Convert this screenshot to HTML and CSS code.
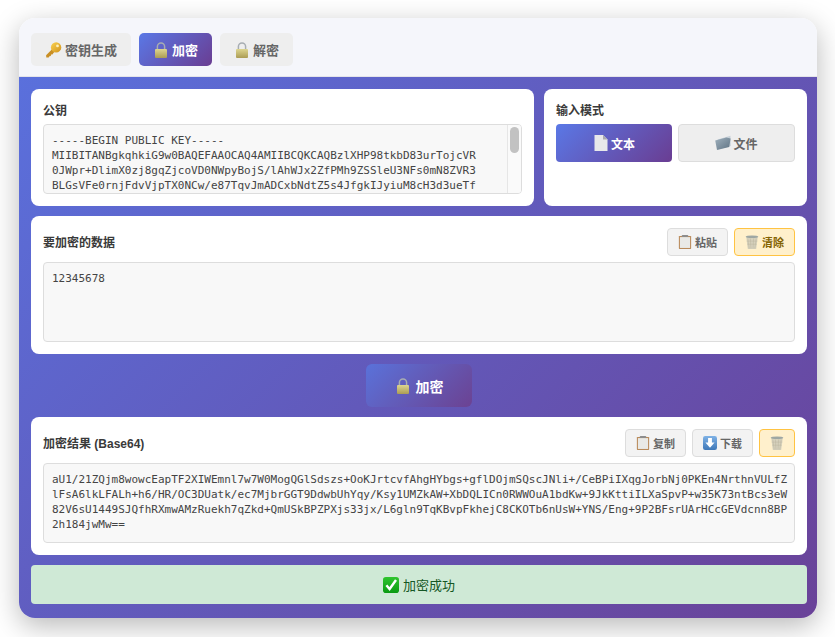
FILE: index.html
```html
<!DOCTYPE html>
<html lang="zh">
<head>
<meta charset="utf-8">
<title>RSA 加密</title>
<link rel="stylesheet" href="styles.css">
</head>
<body>
<svg class="defs" width="0" height="0" aria-hidden="true">
  <defs>
    <linearGradient id="gk" x1="0" y1="0" x2="1" y2="1"><stop offset="0" stop-color="#fbd24e"/><stop offset="1" stop-color="#d0921e"/></linearGradient>
    <linearGradient id="gl" x1="0" y1="0" x2="0" y2="1"><stop offset="0" stop-color="#ddd58f"/><stop offset="1" stop-color="#ab9c54"/></linearGradient>
    <linearGradient id="gf" x1="0" y1="0" x2="1" y2="1"><stop offset="0" stop-color="#9fb0bd"/><stop offset="1" stop-color="#5f7383"/></linearGradient>
    <linearGradient id="gd" x1="0" y1="0" x2="0" y2="1"><stop offset="0" stop-color="#7fb2e6"/><stop offset="1" stop-color="#3f78b8"/></linearGradient>
    <linearGradient id="gc" x1="0" y1="0" x2="0" y2="1"><stop offset="0" stop-color="#2fc52f"/><stop offset="1" stop-color="#0a9a12"/></linearGradient>
    <symbol id="i-key" viewBox="0 0 16 16">
      <path d="M8 5.8.6 13.2l.2 2.2 2.4.2.7-1.4 1.4-.2.2-1.4 1.4-.2L10.2 8z" fill="#c98f24"/>
      <circle cx="10.6" cy="5.4" r="5.2" fill="url(#gk)"/>
      <circle cx="12" cy="3.9" r="1.4" fill="#fdf0bd"/>
    </symbol>
    <symbol id="i-lock" viewBox="0 0 16 16">
      <path d="M4.4 8V4.6a3.6 3.6 0 0 1 7.2 0V8" fill="none" stroke="#a7adb2" stroke-width="1.5"/>
      <rect x="2" y="7" width="12" height="9" rx="1" fill="url(#gl)"/>
    </symbol>
    <symbol id="i-doc" viewBox="0 0 16 16">
      <path d="M1.5 0h8.5L14.5 4.5V16H1.5z" fill="#e8e8ea"/>
      <path d="M10 0 14.5 4.5H10z" fill="#a9a9ae"/>
    </symbol>
    <symbol id="i-folder" viewBox="0 0 16 16">
      <path d="M2.6 4.4 15.4 .8 15.8 11 3 14.6z" fill="#c6d0d8"/>
      <path d="M.2 5.6 11.4 2.6l4.2 1L14.2 12 2 15z" fill="url(#gf)"/>
    </symbol>
    <symbol id="i-clip" viewBox="0 0 16 16">
      <rect x="1" y="1" width="14" height="15" rx=".8" fill="#b98a5a"/>
      <rect x="2.2" y="2.4" width="11.6" height="12.4" fill="#e9e9e6"/>
      <rect x="4.5" y="0" width="7" height="2.4" rx=".5" fill="#8d8d8d"/>
    </symbol>
    <symbol id="i-trash" viewBox="0 0 16 16">
      <path d="M1.4 2h13.2l-1.8 14H3.2z" fill="#d6d1bd"/>
      <path d="M3.2 4 4.8 15.5M6.2 4l.6 11.5M9.8 4l-.6 11.5M12.8 4 11.2 15.5M2 7h12M2.6 10.5h10.8" stroke="#b8b29a" stroke-width=".5" fill="none"/>
      <ellipse cx="8" cy="2" rx="7.2" ry="1.5" fill="#9ea7a3"/>
    </symbol>
    <symbol id="i-down" viewBox="0 0 16 16">
      <rect x="0" y="0" width="16" height="16" rx="2.6" fill="url(#gd)"/>
      <path d="M5.8 2.4h4.4v5h3L8 13.4 2.8 7.4h3z" fill="#fff"/>
    </symbol>
    <symbol id="i-check" viewBox="0 0 16 16">
      <rect x="0" y="0" width="16" height="16" rx="2.8" fill="url(#gc)"/>
      <path d="M3.4 8.2 6.6 12 13 3" fill="none" stroke="#fff" stroke-width="2.4"/>
    </symbol>
  </defs>
</svg>
<main class="window">
  <nav class="tabs">
    <button class="tab"><svg class="ico17"><use href="#i-key"/></svg>密钥生成</button>
    <button class="tab tab-active"><svg class="ico16"><use href="#i-lock"/></svg>加密</button>
    <button class="tab"><svg class="ico16"><use href="#i-lock"/></svg>解密</button>
  </nav>
  <div class="content">
    <div class="top-row">
      <section class="card">
        <div class="label label-key">公钥</div>
        <div class="keybox">
          <pre class="key-text">-----BEGIN PUBLIC KEY-----
MIIBITANBgkqhkiG9w0BAQEFAAOCAQ4AMIIBCQKCAQBzlXHP98tkbD83urTojcVR
0JWpr+DlimX0zj8gqZjcoVD0NWpyBojS/lAhWJx2ZfPMh9ZSSleU3NFs0mN8ZVR3
BLGsVFe0rnjFdvVjpTX0NCw/e87TqvJmADCxbNdtZ5s4JfgkIJyiuM8cH3d3ueTf</pre>
          <div class="scrolltrack"><div class="scrollthumb"></div></div>
        </div>
      </section>
      <section class="card">
        <div class="label label-key">输入模式</div>
        <div class="modes">
          <button class="mode mode-active"><svg class="ico16"><use href="#i-doc"/></svg>文本</button>
          <button class="mode"><svg class="ico16"><use href="#i-folder"/></svg>文件</button>
        </div>
      </section>
    </div>
    <section class="card">
      <div class="card-head">
        <div class="label">要加密的数据</div>
        <div class="actions">
          <button class="small"><svg class="ico14"><use href="#i-clip"/></svg>粘贴</button>
          <button class="small small-warn"><svg class="ico14"><use href="#i-trash"/></svg>清除</button>
        </div>
      </div>
      <pre class="box">12345678</pre>
    </section>
    <div class="run-row">
      <button class="run"><svg class="ico16"><use href="#i-lock"/></svg>加密</button>
    </div>
    <section class="card">
      <div class="card-head">
        <div class="label">加密结果 (Base64)</div>
        <div class="actions">
          <button class="small"><svg class="ico14"><use href="#i-clip"/></svg>复制</button>
          <button class="small"><svg class="ico14"><use href="#i-down"/></svg>下载</button>
          <button class="small small-warn"><svg class="ico14"><use href="#i-trash"/></svg></button>
        </div>
      </div>
      <pre class="box">aU1/21ZQjm8wowcEapTF2XIWEmnl7w7W0MogQGlSdszs+OoKJrtcvfAhgHYbgs+gflDOjmSQscJNli+/CeBPiIXqgJorbNj0PKEn4NrthnVULfZ
lFsA6lkLFALh+h6/HR/OC3DUatk/ec7MjbrGGT9DdwbUhYqy/Ksy1UMZkAW+XbDQLICn0RWWOuA1bdKw+9JkKttiILXaSpvP+w35K73ntBcs3eW
82V6sU1449SJQfhRXmwAMzRuekh7qZkd+QmUSkBPZPXjs33jx/L6gln9TqKBvpFkhejC8CKOTb6nUsW+YNS/Eng+9P2BFsrUArHCcGEVdcnn8BP
2h184jwMw==</pre>
    </section>
    <div class="status"><svg class="ico16"><use href="#i-check"/></svg>加密成功</div>
  </div>
</main>
</body>
</html>
```
FILE: styles.css
```css
* { box-sizing: border-box; }
html, body { margin: 0; height: 100%; }
body {
  background: #fff;
  padding: 18px 18px 19px 19px;
  font-family: "Liberation Sans", "Noto Sans CJK SC", sans-serif;
  overflow: hidden;
}
.defs { position: absolute; }
.window {
  height: 600px;
  border-radius: 16px;
  overflow: hidden;
  display: flex;
  flex-direction: column;
  box-shadow: 0 8px 28px rgba(0, 0, 0, .28);
}
.tabs {
  height: 59px;
  flex: none;
  display: flex;
  gap: 8px;
  align-items: flex-start;
  padding: 15px 12px 0;
  background: #f5f6fb;
  border-bottom: 1px solid #e4e4ea;
}
button {
  font-family: inherit;
  display: flex;
  align-items: center;
  justify-content: center;
  cursor: pointer;
}
.ico17 { width: 17px; height: 16px; flex: none; }
.ico16 { width: 16px; height: 16px; flex: none; }
.ico14 { width: 14px; height: 14px; flex: none; }
.tab {
  height: 33px;
  padding: 0 14px;
  gap: 3px;
  border: 0;
  border-radius: 5px;
  background: #eeeeee;
  color: #666;
  font-size: 13px;
  font-weight: 700;
}
.tab-active {
  background: linear-gradient(135deg, #5a78e6 0%, #6a3d92 100%);
  color: #fff;
}
.content {
  flex: 1;
  display: flex;
  flex-direction: column;
  gap: 10px;
  padding: 12px 10px 14px 12px;
  background: linear-gradient(135deg, #5a70dc 0%, #6a4298 100%);
}
.top-row {
  display: grid;
  grid-template-columns: 1fr 263px;
  gap: 10px;
}
.card {
  background: #fff;
  border-radius: 8px;
  padding: 12px;
}
.label {
  font-size: 12px;
  font-weight: 700;
  color: #3a3a3a;
  line-height: 15px;
}
.label-key {
  line-height: 21px;
  margin-bottom: 2px;
}
.keybox {
  height: 70px;
  display: flex;
  overflow: hidden;
  background: #f8f8f8;
  border: 1px solid #dddddd;
  border-radius: 4px;
}
.key-text, .box {
  margin: 0;
  font-family: "DejaVu Sans Mono", monospace;
  font-size: 11px;
  line-height: 15px;
  color: #444;
  white-space: pre;
}
.key-text {
  flex: 1;
  padding: 8px;
  overflow: hidden;
}
.scrolltrack {
  width: 14px;
  flex: none;
  padding: 2px;
  background: #fafafa;
  border-left: 1px solid #e6e6e6;
}
.scrollthumb {
  height: 26px;
  width: 9px;
  border-radius: 5px;
  background: #c2c2c2;
}
.modes {
  display: grid;
  grid-template-columns: 116px 117px;
  gap: 6px;
}
.mode {
  height: 38px;
  gap: 2px;
  border: 1px solid #dddddd;
  border-radius: 4px;
  background: #eeeeee;
  color: #666;
  font-size: 12px;
  font-weight: 700;
}
.mode-active {
  border: 0;
  background: linear-gradient(135deg, #5a78e6 0%, #6a3d92 100%);
  color: #fff;
}
.card-head {
  height: 28px;
  display: flex;
  align-items: center;
  justify-content: space-between;
  margin-bottom: 6px;
}
.card-head .label { padding-top: 3px; }
.actions { display: flex; gap: 6px; }
.small {
  height: 28px;
  padding: 0 10px;
  gap: 3px;
  border: 1px solid #dddddd;
  border-radius: 4px;
  background: #f3f3f3;
  color: #666;
  font-size: 11px;
  font-weight: 700;
}
.small-warn {
  background: #fff0cc;
  border-color: #ffc342;
  color: #856404;
}
.box {
  height: 80px;
  padding: 8px;
  background: #f8f8f8;
  border: 1px solid #dddddd;
  border-radius: 4px;
  overflow: hidden;
}
.run-row { display: flex; justify-content: center; }
.run {
  width: 106px;
  height: 43px;
  gap: 5px;
  border: 0;
  border-radius: 6px;
  background: linear-gradient(135deg, #5a72da 0%, #6c4292 100%);
  color: #fff;
  font-size: 14px;
  font-weight: 700;
}
.status {
  height: 39px;
  display: flex;
  align-items: center;
  justify-content: center;
  gap: 4px;
  background: #cfe9d6;
  border-radius: 4px;
  color: #155724;
  font-size: 13px;
}
```
